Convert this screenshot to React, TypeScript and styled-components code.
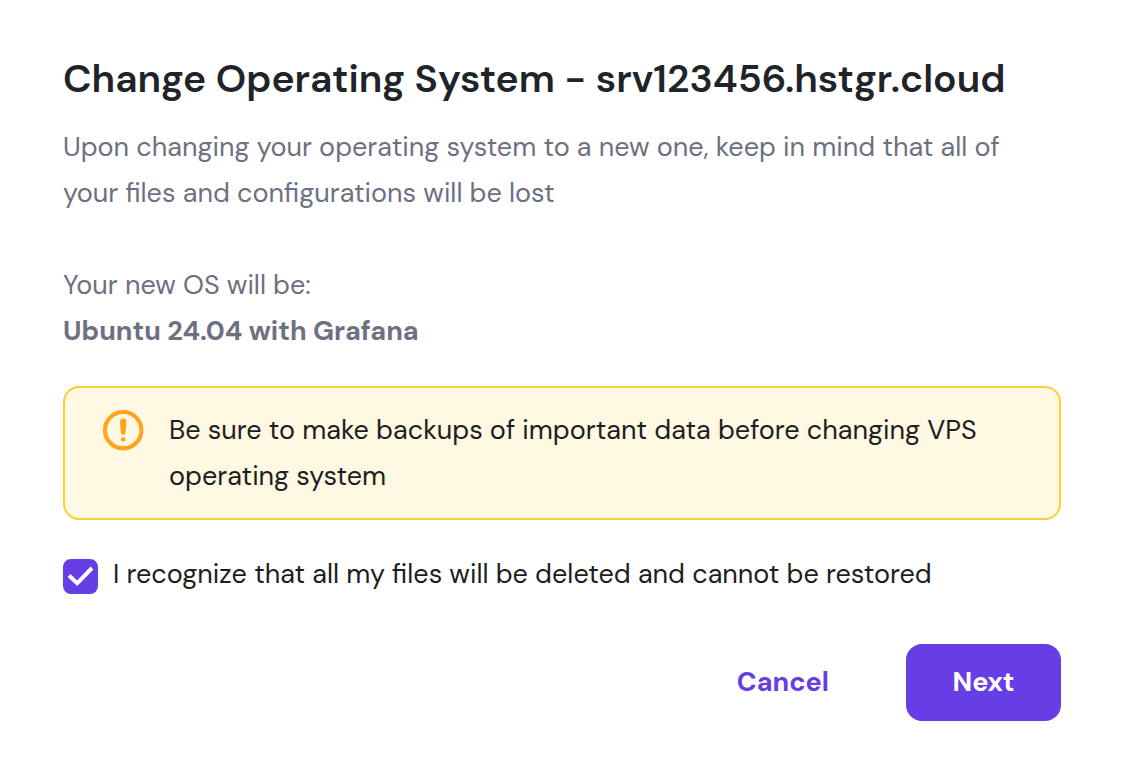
import React, { useState } from "react";
import styled, { createGlobalStyle } from "styled-components";

const GlobalStyle = createGlobalStyle`
  * { box-sizing: border-box; }
  body {
    margin: 0;
    background: #ffffff;
    color: #1d1e20;
    font-family: "DM Sans", Inter, "Open Sans", sans-serif;
    font-size: 27px;
    line-height: 46px;
  }
`;

const Dialog = styled.main`
  padding: 53px 68px 48px 63px;
`;

const Title = styled.h1`
  margin: 0 0 19px;
  font-size: 39px;
  line-height: 52px;
  font-weight: 600;
  color: #1f2429;
`;

const Text = styled.p<{ $strong?: boolean; $gap?: boolean }>`
  margin: 0 0 ${(p) => (p.$gap ? 46 : 0)}px;
  color: #6d7081;
  font-weight: ${(p) => (p.$strong ? 700 : 400)};
`;

const Alert = styled.div`
  display: flex;
  gap: 25px;
  margin-top: 32px;
  padding: 19px 37px;
  border: 2px solid #ffcd35;
  border-radius: 16px;
  background: #fff8e2;
`;

const AlertIcon = styled.svg`
  flex: none;
  width: 42px;
  height: 42px;
  margin-top: 2px;
`;

const AlertText = styled.p`
  margin: 0;
`;

const CheckRow = styled.label`
  display: flex;
  align-items: flex-start;
  gap: 15px;
  margin-top: 31px;
  cursor: pointer;
`;

const CheckHolder = styled.span`
  display: grid;
  flex: none;
  margin-top: 8px;
`;

const CheckBox = styled.input`
  grid-area: 1 / 1;
  width: 35px;
  height: 35px;
  margin: 0;
  appearance: none;
  border: 2px solid #673de6;
  border-radius: 8px;
  &:checked { background: #673de6; }
`;

const Tick = styled.svg`
  grid-area: 1 / 1;
  width: 35px;
  height: 35px;
  pointer-events: none;
`;

const Actions = styled.div`
  display: flex;
  justify-content: flex-end;
  gap: 31px;
  margin-top: 47px;
`;

const Button = styled.button<{ $primary?: boolean }>`
  min-width: 155px;
  height: 77px;
  padding: 0 46px 2px;
  border: 0;
  border-radius: 16px;
  background: ${(p) => (p.$primary ? "#673de6" : "transparent")};
  color: ${(p) => (p.$primary ? "#ffffff" : "#673de6")};
  font: inherit;
  font-weight: 700;
  cursor: pointer;
`;

export default function App() {
  const [accepted, setAccepted] = useState(true);
  return (
    <>
      <GlobalStyle />
      <Dialog>
        <Title>Change Operating System - srv123456.hstgr.cloud</Title>
        <Text $gap>
          Upon changing your operating system to a new one, keep in mind that all of
          <br />
          your files and configurations will be lost
        </Text>
        <Text>Your new OS will be:</Text>
        <Text $strong>Ubuntu 24.04 with Grafana</Text>
        <Alert role="alert">
          <AlertIcon viewBox="0 0 42 42" aria-hidden="true">
            <circle cx="21.2" cy="21.2" r="18.2" fill="none" stroke="#ffa41c" strokeWidth="4.1" />
            <path d="M18 12.6a3.2 3.2 0 0 1 6.4 0l-.8 10.8a2.4 2.4 0 0 1-4.8 0z" fill="#ffa41c" />
            <circle cx="21.2" cy="30.3" r="2.2" fill="#ffa41c" />
          </AlertIcon>
          <AlertText>
            Be sure to make backups of important data before changing VPS
            <br />
            operating system
          </AlertText>
        </Alert>
        <CheckRow>
          <CheckHolder>
            <CheckBox type="checkbox" checked={accepted} onChange={(e) => setAccepted(e.target.checked)} />
            {accepted && (
              <Tick viewBox="0 0 35 35" aria-hidden="true">
                <path d="M6 16.5l8.2 7.8L29 9" fill="none" stroke="#fff" strokeWidth="4" />
              </Tick>
            )}
          </CheckHolder>
          <span>I recognize that all my files will be deleted and cannot be restored</span>
        </CheckRow>
        <Actions>
          <Button type="button">Cancel</Button>
          <Button type="button" $primary>Next</Button>
        </Actions>
      </Dialog>
    </>
  );
}
